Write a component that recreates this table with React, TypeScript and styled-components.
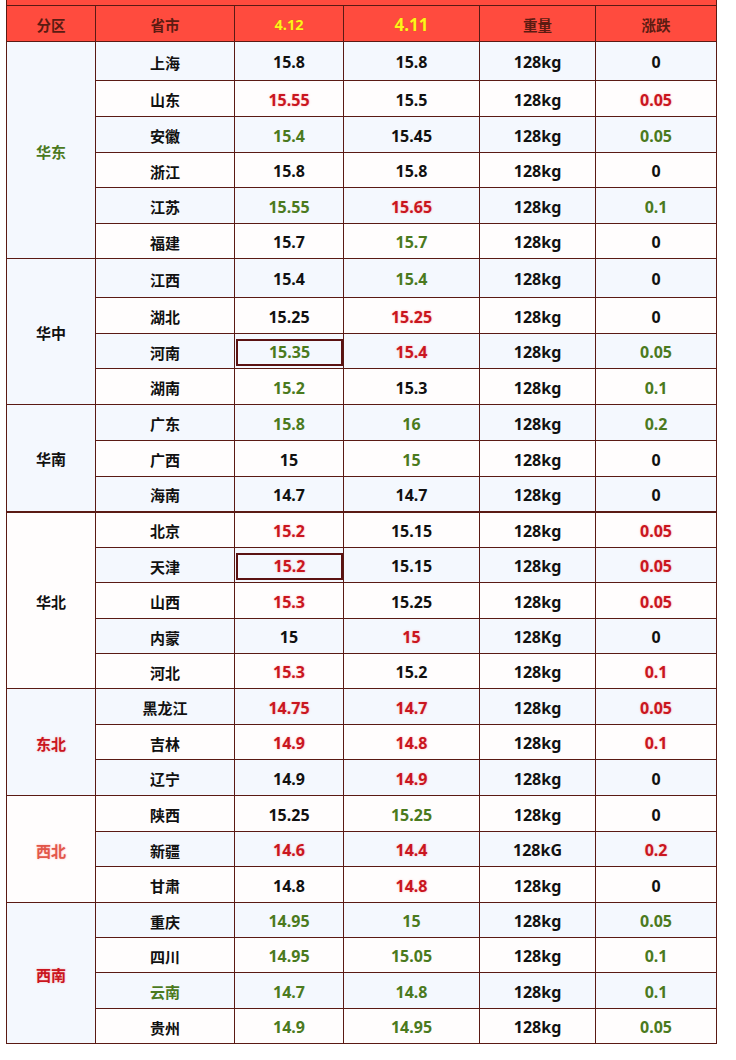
import styled, { createGlobalStyle } from "styled-components";

type Tone = "k" | "r" | "g" | "p";

const colors: Record<Tone, string> = {
  k: "#111111",
  r: "#c9161f",
  g: "#4b7a1e",
  p: "#e2574a",
};

const GlobalStyle = createGlobalStyle`
  body {
    margin: 0;
    background: #ffffff;
    font-family: "Noto Sans", "Noto Sans CJK SC", sans-serif;
  }
`;

const Page = styled.div`
  padding-left: 6px;
  width: 736px;
  height: 1060px;
  overflow: hidden;
  box-sizing: border-box;
`;

const Table = styled.table`
  width: 711px;
  border-collapse: collapse;
  table-layout: fixed;
  color: #111;
`;

const Strip = styled.td`
  height: 5px;
  padding: 0;
  background: #ff4b3e;
  border: 1px solid #5a1a14;
  border-top: none;
`;

const HeadRow = styled.tr`
  height: 36px;
`;

const HeadCell = styled.th<{ $yellow?: boolean; $big?: boolean }>`
  padding: 1px 0 0;
  background: #ff4b3e;
  border: 1px solid #5a1a14;
  font-family: "Noto Sans", "Noto Sans CJK SC", sans-serif;
  font-weight: 700;
  font-size: ${(p) => (p.$big ? "17px" : "14.5px")};
  color: ${(p) => (p.$yellow ? "#fff21a" : "#5b1b12")};
  text-shadow: ${(p) => (p.$yellow ? "0 0 1px #c06010" : "none")};
`;

const Row = styled.tr<{ $alt: boolean; $thick?: boolean; $h: number }>`
  height: ${(p) => p.$h}px;
  background: ${(p) => (p.$alt ? "#fffdfd" : "#f4f8fe")};

  > td {
    border-top: ${(p) => (p.$thick ? "2px solid #5a1a14" : "1px solid #5a1a14")};
  }
`;

const Cell = styled.td<{ $tone: Tone; $num?: boolean }>`
  padding: 2px 0 0;
  border: 1px solid #5a1a14;
  text-align: center;
  font-weight: 700;
  font-size: ${(p) => (p.$num ? "16px" : "15px")};
  color: ${(p) => colors[p.$tone]};
  text-shadow: ${(p) =>
    p.$tone === "r" || p.$tone === "p" ? "0 0 2px rgba(255, 120, 120, 0.6)" : "none"};
`;

const Boxed = styled.div`
  margin: 0 0 0 1px;
  height: 23px;
  line-height: 23px;
  border: 2px solid #5a1212;
`;

type Item = {
  name: string;
  nameTone?: Tone;
  a: [string, Tone, boolean?];
  b: [string, Tone];
  w?: string;
  d: [string, Tone];
};

type Group = { region: string; tone: Tone; items: Item[] };

const groups: Group[] = [
  {
    region: "华东",
    tone: "g",
    items: [
      { name: "上海", a: ["15.8", "k"], b: ["15.8", "k"], d: ["0", "k"] },
      { name: "山东", a: ["15.55", "r"], b: ["15.5", "k"], d: ["0.05", "r"] },
      { name: "安徽", a: ["15.4", "g"], b: ["15.45", "k"], d: ["0.05", "g"] },
      { name: "浙江", a: ["15.8", "k"], b: ["15.8", "k"], d: ["0", "k"] },
      { name: "江苏", a: ["15.55", "g"], b: ["15.65", "r"], d: ["0.1", "g"] },
      { name: "福建", a: ["15.7", "k"], b: ["15.7", "g"], d: ["0", "k"] },
    ],
  },
  {
    region: "华中",
    tone: "k",
    items: [
      { name: "江西", a: ["15.4", "k"], b: ["15.4", "g"], d: ["0", "k"] },
      { name: "湖北", a: ["15.25", "k"], b: ["15.25", "r"], d: ["0", "k"] },
      { name: "河南", a: ["15.35", "g", true], b: ["15.4", "r"], d: ["0.05", "g"] },
      { name: "湖南", a: ["15.2", "g"], b: ["15.3", "k"], d: ["0.1", "g"] },
    ],
  },
  {
    region: "华南",
    tone: "k",
    items: [
      { name: "广东", a: ["15.8", "g"], b: ["16", "g"], d: ["0.2", "g"] },
      { name: "广西", a: ["15", "k"], b: ["15", "g"], d: ["0", "k"] },
      { name: "海南", a: ["14.7", "k"], b: ["14.7", "k"], d: ["0", "k"] },
    ],
  },
  {
    region: "华北",
    tone: "k",
    items: [
      { name: "北京", a: ["15.2", "r"], b: ["15.15", "k"], d: ["0.05", "r"] },
      { name: "天津", a: ["15.2", "r", true], b: ["15.15", "k"], d: ["0.05", "r"] },
      { name: "山西", a: ["15.3", "r"], b: ["15.25", "k"], d: ["0.05", "r"] },
      { name: "内蒙", a: ["15", "k"], b: ["15", "r"], w: "128Kg", d: ["0", "k"] },
      { name: "河北", a: ["15.3", "r"], b: ["15.2", "k"], d: ["0.1", "r"] },
    ],
  },
  {
    region: "东北",
    tone: "r",
    items: [
      { name: "黑龙江", a: ["14.75", "r"], b: ["14.7", "r"], d: ["0.05", "r"] },
      { name: "吉林", a: ["14.9", "r"], b: ["14.8", "r"], d: ["0.1", "r"] },
      { name: "辽宁", a: ["14.9", "k"], b: ["14.9", "r"], d: ["0", "k"] },
    ],
  },
  {
    region: "西北",
    tone: "p",
    items: [
      { name: "陕西", a: ["15.25", "k"], b: ["15.25", "g"], d: ["0", "k"] },
      { name: "新疆", a: ["14.6", "r"], b: ["14.4", "r"], w: "128kG", d: ["0.2", "r"] },
      { name: "甘肃", a: ["14.8", "k"], b: ["14.8", "r"], d: ["0", "k"] },
    ],
  },
  {
    region: "西南",
    tone: "r",
    items: [
      { name: "重庆", a: ["14.95", "g"], b: ["15", "g"], d: ["0.05", "g"] },
      { name: "四川", a: ["14.95", "g"], b: ["15.05", "g"], d: ["0.1", "g"] },
      { name: "云南", nameTone: "g", a: ["14.7", "g"], b: ["14.8", "g"], d: ["0.1", "g"] },
      { name: "贵州", a: ["14.9", "g"], b: ["14.95", "g"], d: ["0.05", "g"] },
    ],
  },
];

// row pitches as measured in the source table
const heights = [
  39, 36, 36, 35, 36, 35, 39, 36, 35, 36, 36, 36, 35, 36, 35, 36, 35, 35, 36, 35, 36, 36,
  35, 36, 35, 35, 36, 35,
];

const widths = [89, 139, 109, 136, 116, 121];

export default function App() {
  let index = 0;
  return (
    <Page>
      <GlobalStyle />
      <Table>
        <colgroup>
          {widths.map((w, i) => (
            <col key={i} style={{ width: w }} />
          ))}
        </colgroup>
        <tbody>
          <tr>
            <Strip colSpan={6} />
          </tr>
          <HeadRow>
            <HeadCell>分区</HeadCell>
            <HeadCell>省市</HeadCell>
            <HeadCell $yellow>4.12</HeadCell>
            <HeadCell $yellow $big>
              4.11
            </HeadCell>
            <HeadCell>重量</HeadCell>
            <HeadCell>涨跌</HeadCell>
          </HeadRow>
          {groups.map((g) =>
            g.items.map((it, j) => {
              const i = index;
              index += 1;
              return (
                <Row
                  key={it.name}
                  $alt={i % 2 === 1}
                  $h={heights[i]}
                  $thick={g.region === "华北" && j === 0}
                >
                  {j === 0 && (
                    <Cell rowSpan={g.items.length} $tone={g.tone}>
                      {g.region}
                    </Cell>
                  )}
                  <Cell $tone={it.nameTone ?? "k"}>{it.name}</Cell>
                  <Cell $num $tone={it.a[1]}>
                    {it.a[2] ? <Boxed>{it.a[0]}</Boxed> : it.a[0]}
                  </Cell>
                  <Cell $num $tone={it.b[1]}>
                    {it.b[0]}
                  </Cell>
                  <Cell $num $tone="k">
                    {it.w ?? "128kg"}
                  </Cell>
                  <Cell $num $tone={it.d[1]}>
                    {it.d[0]}
                  </Cell>
                </Row>
              );
            })
          )}
        </tbody>
      </Table>
    </Page>
  );
}
